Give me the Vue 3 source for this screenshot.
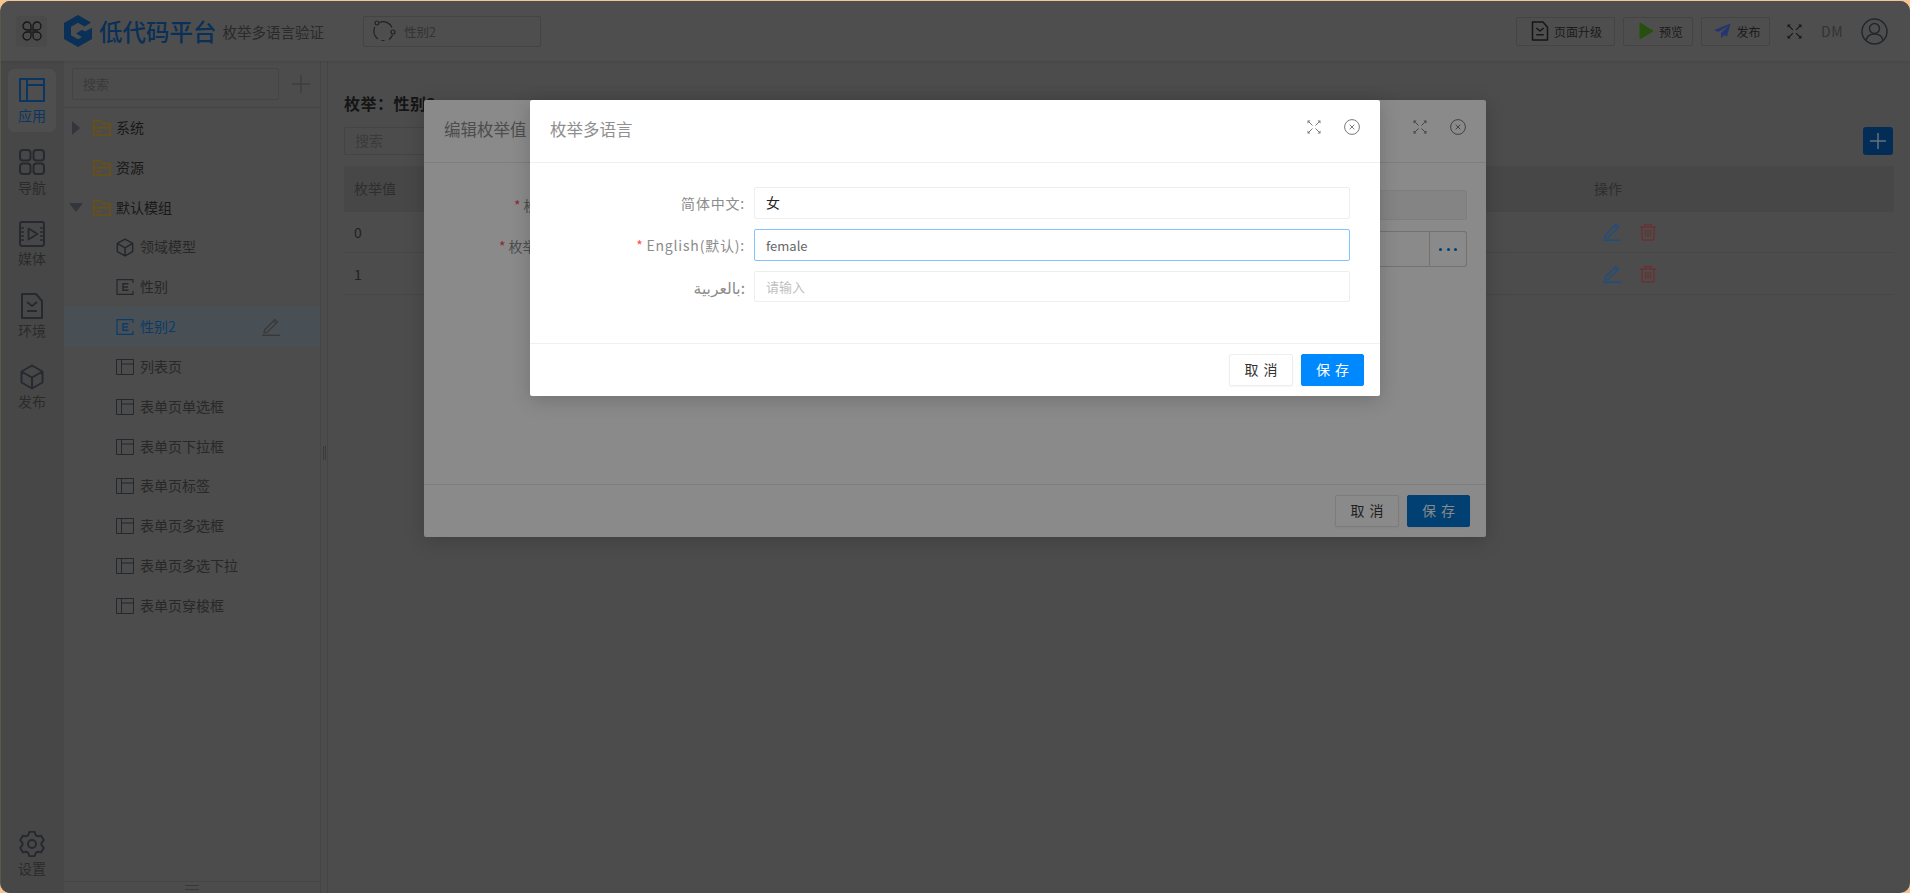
<template>
  <div class="window">
    <svg class="sprites" width="0" height="0" aria-hidden="true">
      <defs>
        <symbol id="i-layout" viewBox="0 0 26 24">
          <path d="M1 1h24v22H1zM8 1v22M8 7h17" fill="none" stroke="currentColor" stroke-width="2" />
        </symbol>
        <symbol id="i-page" viewBox="0 0 18 16">
          <path d="M.5.5h17v15H.5zM5.5.5v15M5.5 5h12" fill="none" stroke="currentColor" stroke-width="1" />
        </symbol>
        <symbol id="i-enum" viewBox="0 0 18 16">
          <path d="M17 4V.7H1v14.6h16V12" fill="none" stroke="currentColor" stroke-width="1.2" />
          <path d="M12.500 4.700H7v6.600h5.500M7 8h5" fill="none" stroke="currentColor" stroke-width="1.400" />
        </symbol>
        <symbol id="i-cube" viewBox="0 0 24 26">
          <path d="M12 1.500 22.500 7.500v11L12 24.500 1.500 18.500v-11zM1.500 7.500 12 13.500l10.500-6M12 13.500v11" fill="none" stroke="currentColor" stroke-width="2" stroke-linejoin="round" />
        </symbol>
        <symbol id="i-folder" viewBox="0 0 18 16">
          <path d="M.75 15.250V.75h6.500l2 3h8v11.500zM.75 7.750h16.500M3.500 11.250H8" fill="none" stroke="currentColor" stroke-width="1.500" />
        </symbol>
        <symbol id="i-doc" viewBox="0 0 24 26">
          <path d="M2 1h14l6 7v17H2zM7 9l5 4 5-4M7 18h10" fill="none" stroke="currentColor" stroke-width="2" stroke-linejoin="round" />
        </symbol>
        <symbol id="i-pen" viewBox="0 0 18 18">
          <path d="M2.500 12 12.800 1.500l2.700 2.600L5 14.500l-3 .5zM11.300 3l2.700 2.600" fill="none" stroke="currentColor" stroke-width="1.200" />
          <path d="M0 17.300h18" stroke="currentColor" stroke-width="1.400" />
        </symbol>
        <symbol id="i-expand" viewBox="0 0 14 14">
          <path d="M1.500 1.500l4 4M12.500 1.500l-4 4M1.500 12.500l4-4M12.500 12.500l-4-4" fill="none" stroke="currentColor" stroke-width="1" />
          <path d="M.5.5h3l-3 3zM13.500.5h-3l3 3zM.5 13.500h3l-3-3zM13.500 13.500h-3l3-3z" fill="currentColor" />
        </symbol>
        <symbol id="i-close" viewBox="0 0 16 16">
          <circle cx="8" cy="8" r="7.400" fill="none" stroke="currentColor" stroke-width="1" />
          <path d="M5.700 5.700l4.600 4.600M10.300 5.700l-4.600 4.600" stroke="currentColor" stroke-width="1" />
        </symbol>
        <symbol id="i-trash" viewBox="0 0 16 18">
          <path d="M0 4h16M5 4V1.500h6V4M2 4v11.500a1.500 1.500 0 0 0 1.500 1.500h9a1.500 1.500 0 0 0 1.500-1.500V4" fill="none" stroke="currentColor" stroke-width="1.500" stroke-linejoin="round" />
          <path d="M5.500 7v7M8 7v7M10.500 7v7" stroke="currentColor" stroke-width="1.200" />
        </symbol>
      </defs>
    </svg>

    <header class="topbar">
      <div class="apps-btn">
        <svg width="20" height="20" viewBox="0 0 20 20">
          <path d="M9 9H5a4 4 0 1 1 4-4zM11 9V5a4 4 0 1 1 4 4zM9 11v4a4 4 0 1 1-4-4zM11 11h4a4 4 0 1 1-4 4z" fill="none" stroke="currentColor" stroke-width="1.300" />
        </svg>
      </div>
      <svg class="logo" width="28" height="32" viewBox="0 0 28 32">
        <path d="M14 0 27 7.500 20.500 11.500 14 7.800 7 11.800v8.400l7 4 4-2.300-6-3.400 6-3.700 3 1.800L28 12.800V24L14 32 0 24V8z" fill="#0a3058" />
      </svg>
      <span class="brand">低代码平台</span>
      <span class="app-name">枚举多语言验证</span>
      <div class="scope">
        <svg width="24" height="22" viewBox="0 0 24 22">
          <path d="M7.500 2.500A9.500 9.500 0 0 1 20 7.500M2.700 7A9.500 9.500 0 0 0 6 19M17 19.500a9.500 9.500 0 0 0 3.500-4.500M9.500 20.500h3" fill="none" stroke="currentColor" stroke-width="1.200" />
          <circle cx="5" cy="3" r="2" fill="none" stroke="currentColor" stroke-width="1.200" />
          <circle cx="21" cy="12" r="2" fill="none" stroke="currentColor" stroke-width="1.200" />
        </svg>
        <span>性别2</span>
      </div>
      <div class="top-actions">
        <button class="top-btn upgrade">
          <svg class="doc-icon" width="18" height="20"><use href="#i-doc" /></svg>页面升级
        </button>
        <button class="top-btn preview">
          <svg width="15" height="18" viewBox="0 0 15 18"><path d="M1 1v16l13-8z" fill="#27500e" stroke="#27500e" stroke-linejoin="round" /></svg>预览
        </button>
        <button class="top-btn publish">
          <svg width="17" height="16" viewBox="0 0 17 16"><path d="M16.500.500 0 7l4.500 2L14 3 7 10v5.500l3-3.500 3 1.500z" fill="#24366e" /></svg>发布
        </button>
        <svg class="full-icon" width="15" height="15"><use href="#i-expand" /></svg>
        <span class="user-name">DM</span>
        <svg class="avatar" width="27" height="27" viewBox="0 0 27 27">
          <circle cx="13.500" cy="13.500" r="12.500" fill="none" stroke="currentColor" stroke-width="1.500" />
          <circle cx="13.500" cy="10.500" r="5" fill="none" stroke="currentColor" stroke-width="1.500" />
          <path d="M5 22.500c1-4.500 4.500-6.500 8.500-6.500s7.500 2 8.500 6.500" fill="none" stroke="currentColor" stroke-width="1.500" />
        </svg>
      </div>
    </header>

    <div class="main">
      <nav class="rail">
        <div class="rail-item active">
          <svg width="26" height="24"><use href="#i-layout" /></svg>
          <span>应用</span>
        </div>
        <div class="rail-item">
          <svg class="nav-icon" width="26" height="26" viewBox="0 0 26 26">
            <rect x="1" y="1" width="10.500" height="10.500" rx="3" fill="none" stroke="currentColor" stroke-width="2" />
            <rect x="14.500" y="1" width="10.500" height="10.500" rx="3" fill="none" stroke="currentColor" stroke-width="2" />
            <rect x="1" y="14.500" width="10.500" height="10.500" rx="3" fill="none" stroke="currentColor" stroke-width="2" />
            <rect x="14.500" y="14.500" width="10.500" height="10.500" rx="3" fill="none" stroke="currentColor" stroke-width="2" />
          </svg>
          <span>导航</span>
        </div>
        <div class="rail-item">
          <svg width="26" height="26" viewBox="0 0 26 26">
            <rect x="1" y="1" width="24" height="24" rx="2" fill="none" stroke="currentColor" stroke-width="2" />
            <path d="M9.500 7.500v11L18.500 13z" fill="none" stroke="currentColor" stroke-width="1.800" stroke-linejoin="round" />
            <path d="M1 7h4M1 11h4M1 15h4M1 19h4M21 7h4M21 11h4M21 15h4M21 19h4" stroke="currentColor" stroke-width="1.500" />
          </svg>
          <span>媒体</span>
        </div>
        <div class="rail-item">
          <svg width="24" height="26"><use href="#i-doc" /></svg>
          <span>环境</span>
        </div>
        <div class="rail-item">
          <svg width="24" height="26"><use href="#i-cube" /></svg>
          <span>发布</span>
        </div>
        <div class="rail-item settings">
          <svg width="26" height="26" viewBox="0 0 26 26">
            <path :d="gearPath" fill="none" stroke="currentColor" stroke-width="2" stroke-linejoin="round" />
            <circle cx="13" cy="13" r="4" fill="none" stroke="currentColor" stroke-width="2" />
          </svg>
          <span>设置</span>
        </div>
      </nav>

      <aside class="tree">
        <div class="tree-search">
          <div class="search-box">搜索</div>
          <svg width="18" height="18" viewBox="0 0 18 18"><path d="M9 0v18M0 9h18" stroke="currentColor" stroke-width="1.500" /></svg>
        </div>
        <ul class="tree-list">
          <li
            v-for="row in treeRows"
            :key="row.label"
            :class="['tree-row', row.icon === 'folder' ? 'group' : 'leaf', { selected: row.selected }]"
          >
            <template v-if="row.icon === 'folder'">
              <span class="arrow-slot"><i v-if="row.arrow" :class="['arrow', row.arrow]"></i></span>
              <svg class="folder" width="18" height="16"><use href="#i-folder" /></svg>
            </template>
            <svg v-else-if="row.icon === 'cube'" width="18" height="19"><use href="#i-cube" /></svg>
            <svg v-else width="18" height="16"><use :href="'#i-' + row.icon" /></svg>
            <span class="row-text">{{ row.label }}</span>
            <svg v-if="row.selected" class="row-edit" width="18" height="18"><use href="#i-pen" /></svg>
          </li>
        </ul>
        <div class="tree-foot"><i></i></div>
      </aside>

      <div class="splitter"><i></i></div>

      <section class="content">
        <h2 class="page-title">枚举：性别2</h2>
        <div class="toolbar">
          <div class="search-box wide">搜索</div>
          <button class="add-btn">
            <svg width="16" height="16" viewBox="0 0 16 16"><path d="M8 0v16M0 8h16" stroke="#66727e" stroke-width="1.500" /></svg>
          </button>
        </div>
        <div class="table-row table-head">
          <div>枚举值</div>
          <div>操作</div>
        </div>
        <div v-for="v in ['0', '1']" :key="v" class="table-row">
          <div>{{ v }}</div>
          <div class="row-actions">
            <svg class="edit" width="18" height="18"><use href="#i-pen" /></svg>
            <svg class="del" width="16" height="18"><use href="#i-trash" /></svg>
          </div>
        </div>
      </section>
    </div>

    <!-- 底层弹窗：编辑枚举值 -->
    <div class="modal modal-edit">
      <div class="modal-head">
        <span class="modal-title">编辑枚举值</span>
        <svg class="head-full" width="14" height="14"><use href="#i-expand" /></svg>
        <svg class="head-close" width="16" height="16"><use href="#i-close" /></svg>
      </div>
      <div class="modal-body">
        <div class="edit-row first">
          <label><em>*</em>枚举值</label>
          <div class="edit-input disabled"></div>
        </div>
        <div class="edit-row second">
          <label><em>*</em>枚举名称</label>
          <div class="edit-input"></div>
          <div class="more-btn"><i></i><i></i><i></i></div>
        </div>
      </div>
      <div class="modal-foot">
        <button class="btn">取 消</button>
        <button class="btn primary">保 存</button>
      </div>
    </div>

    <!-- 顶层弹窗：枚举多语言 -->
    <div class="modal modal-lang">
      <div class="modal-head">
        <span class="modal-title">枚举多语言</span>
        <svg class="head-full" width="14" height="14"><use href="#i-expand" /></svg>
        <svg class="head-close" width="16" height="16"><use href="#i-close" /></svg>
      </div>
      <div class="modal-body lang-body">
        <div v-for="f in langFields" :key="f.label" class="lang-row">
          <label :class="{ arabic: f.arabic }"><em v-if="f.required">*</em>{{ f.label }}:</label>
          <input :class="{ focused: f.required, cjk: f.value !== 'female' }" :value="f.value" placeholder="请输入" />
        </div>
      </div>
      <div class="modal-foot">
        <button class="btn">取 消</button>
        <button class="btn primary">保 存</button>
      </div>
    </div>
  </div>
</template>

<script setup>
const treeRows = [
  { label: "系统", icon: "folder", arrow: "right" },
  { label: "资源", icon: "folder" },
  { label: "默认模组", icon: "folder", arrow: "down" },
  { label: "领域模型", icon: "cube" },
  { label: "性别", icon: "enum" },
  { label: "性别2", icon: "enum", selected: true },
  { label: "列表页", icon: "page" },
  { label: "表单页单选框", icon: "page" },
  { label: "表单页下拉框", icon: "page" },
  { label: "表单页标签", icon: "page" },
  { label: "表单页多选框", icon: "page" },
  { label: "表单页多选下拉", icon: "page" },
  { label: "表单页穿梭框", icon: "page" },
];

const langFields = [
  { label: "简体中文", value: "女" },
  { label: "English(默认)", value: "female", required: true },
  { label: "بالعربية", value: "", arabic: true },
];

// 六齿齿轮轮廓
function buildGear() {
  const pts = [];
  for (let i = 0; i < 6; i++) {
    const a = (Math.PI / 3) * i - Math.PI / 2;
    const step = 0.3;
    pts.push([a - step * 1.35, 9.6], [a - step * 0.7, 12.4], [a + step * 0.7, 12.4], [a + step * 1.35, 9.6]);
  }
  return (
    pts
      .map(([a, r], i) => (i ? "L" : "M") + (13 + r * Math.cos(a)).toFixed(2) + " " + (13 + r * Math.sin(a)).toFixed(2))
      .join("") + "Z"
  );
}
const gearPath = buildGear();
</script>

<style>
html,
body {
  margin: 0;
  background: #f7c593;
}
</style>

<style scoped>
.window {
  position: relative;
  box-sizing: border-box;
  height: 892px;
  margin-top: 1px;
  border-left: 1px solid #5c564f;
  border-radius: 10px;
  overflow: hidden;
  display: flex;
  flex-direction: column;
  background: #4c4c4c;
  color: #1d1d1d;
  font-family: "Noto Sans CJK SC", "Noto Sans", "DejaVu Sans", sans-serif;
  font-size: 14px;
}

.sprites {
  position: absolute;
}

.topbar {
  flex: none;
  height: 60px;
  display: flex;
  align-items: center;
  padding-left: 15px;
  background: #4e4e4e;
  box-shadow: 0 1px 3px rgba(0, 0, 0, 0.08);
  position: relative;
}

.apps-btn {
  width: 31px;
  height: 31px;
  display: flex;
  align-items: center;
  justify-content: center;
  background: #4a4a4a;
  color: #161616;
  border-radius: 4px;
}

.logo {
  margin-left: 17px;
}

.brand {
  margin-left: 7px;
  font-size: 23.500px;
  line-height: 32px;
  font-weight: 500;
  color: #0a3058;
}

.app-name {
  margin-left: 6px;
  font-size: 14.500px;
  color: #2a2a2a;
}

.scope {
  margin-left: 39px;
  width: 178px;
  height: 31px;
  box-sizing: border-box;
  border: 1px solid #444;
  border-radius: 2px;
  display: flex;
  align-items: center;
  gap: 8px;
  padding-left: 8px;
  color: #222;
  font-size: 12.500px;
}

.scope span {
  color: #333;
}

.top-actions {
  margin-left: auto;
  display: flex;
  align-items: center;
  padding-right: 22px;
}

.top-btn {
  height: 29px;
  box-sizing: border-box;
  border: 1px solid #444;
  border-radius: 2px;
  background: none;
  color: #1a1a1a;
  display: flex;
  align-items: center;
  justify-content: center;
  gap: 5px;
  padding: 0;
  font: 12px "Noto Sans CJK SC", sans-serif;
}

.upgrade {
  width: 99px;
  padding-left: 2px;
}

.preview {
  width: 70px;
  margin-left: 8px;
  padding-left: 6px;
}

.publish {
  width: 69px;
  margin-left: 8px;
  padding-left: 4px;
}

.doc-icon {
  color: #161616;
}

.full-icon {
  margin-left: 17px;
  color: #161616;
}

.user-name {
  margin-left: 19px;
  color: #333;
  font-size: 14px;
  letter-spacing: 0.5px;
}

.avatar {
  margin-left: 18px;
  color: #23272c;
}

.main {
  flex: 1;
  min-height: 0;
  display: flex;
}

.rail {
  flex: none;
  width: 63px;
  box-sizing: border-box;
  padding: 8px 0 8px 7px;
  background: #474747;
  display: flex;
  flex-direction: column;
  gap: 8.500px;
}

.rail-item {
  width: 48px;
  height: 63px;
  box-sizing: border-box;
  padding-top: 9px;
  display: flex;
  flex-direction: column;
  align-items: center;
  border-radius: 6px;
  color: #262a30;
}

.rail-item span {
  margin-top: 1px;
  line-height: 20px;
  font-size: 14px;
  color: #2b2b2b;
}

.nav-icon {
  margin: -1px 0 1px;
}

.rail-item.active {
  background: #4e4e4e;
  color: #0b3662;
}

.rail-item.active span {
  margin-top: 3px;
  color: #0b3662;
}

.rail-item.settings {
  margin-top: auto;
}

.tree {
  flex: none;
  width: 256px;
  display: flex;
  flex-direction: column;
  border-right: 1px solid #434643;
  box-sizing: content-box;
}

.tree-search {
  flex: none;
  height: 47px;
  box-sizing: border-box;
  display: flex;
  align-items: center;
  gap: 13px;
  padding: 0 0 0 8px;
  border-bottom: 1px solid #444;
  color: #3e3e3e;
}

.search-box {
  box-sizing: border-box;
  width: 207px;
  height: 32px;
  border: 1px solid #444;
  border-radius: 2px;
  padding-left: 10px;
  line-height: 30px;
  font-size: 13px;
  color: #3a3a3a;
}

.search-box.wide {
  width: 240px;
  height: 28px;
  line-height: 24px;
  font-size: 14px;
}

.tree-list {
  flex: 1;
  list-style: none;
  margin: 0;
  padding: 0;
}

.tree-row {
  height: 39.830px;
  box-sizing: border-box;
  display: flex;
  align-items: center;
  gap: 6px;
  color: #282828;
  font-size: 14px;
}

.row-text {
  margin-bottom: 2px;
}

.tree-row svg {
  color: #24272b;
}

.tree-row.group {
  padding-left: 5px;
  gap: 0;
  color: #181818;
}

.tree-row.group .row-text {
  margin-left: 5px;
}

.tree-row.leaf {
  padding-left: 52px;
}

.arrow-slot {
  width: 24px;
  display: block;
}

.arrow {
  display: block;
  width: 0;
  height: 0;
}

.arrow.right {
  margin-left: 3px;
  border-left: 8px solid #33363a;
  border-top: 7.500px solid transparent;
  border-bottom: 7.500px solid transparent;
}

.arrow.down {
  border-top: 9px solid #33363a;
  border-left: 7px solid transparent;
  border-right: 7px solid transparent;
}

.tree-row svg.folder {
  color: #6a5010;
}

.tree-row.selected {
  background: #485055;
  color: #0c3b6a;
}

.tree-row.selected svg {
  color: #0c3b6a;
}

.tree-row svg.row-edit {
  margin-left: auto;
  margin-right: 40px;
  color: #383838;
}

.tree-foot {
  flex: none;
  height: 11px;
  border-top: 1px solid #424643;
  display: flex;
  justify-content: center;
  align-items: center;
}

.tree-foot i {
  width: 14px;
  height: 3px;
  border-top: 1px solid #383838;
  border-bottom: 1px solid #383838;
}

.splitter {
  flex: none;
  width: 6px;
  border-right: 1px solid #434643;
  display: flex;
  align-items: center;
  justify-content: center;
  padding-bottom: 48px;
  box-sizing: content-box;
}

.splitter i {
  width: 1px;
  height: 14px;
  border-left: 1px solid #3a3a3a;
  border-right: 1px solid #3a3a3a;
}

.content {
  flex: 1;
  min-width: 0;
  padding: 30px 16px 0 16px;
}

.page-title {
  margin: 0;
  font-size: 16px;
  line-height: 24px;
  font-weight: 700;
  letter-spacing: 0.5px;
  color: #151515;
}

.toolbar {
  margin-top: 12px;
  display: flex;
  justify-content: space-between;
  align-items: center;
  height: 28px;
  padding-right: 1px;
}

.add-btn {
  width: 30px;
  height: 28px;
  padding: 0;
  border: 0;
  border-radius: 3px;
  background: #032c56;
  display: flex;
  align-items: center;
  justify-content: center;
}

.table-row {
  display: grid;
  grid-template-columns: 1240px 1fr;
  height: 42px;
  box-sizing: border-box;
  align-items: center;
  border-bottom: 1px solid #464646;
  color: #222;
}

.table-row > div {
  padding-left: 10px;
}

.table-row:nth-child(4) {
  height: 41px;
}

.table-head {
  margin-top: 11px;
  height: 46px;
  padding-bottom: 2px;
  background: #474747;
  border-bottom: 0;
  color: #2e2e2e;
}

.row-actions {
  display: flex;
  align-items: center;
  gap: 19px;
}

.table-row > .row-actions {
  padding-left: 19px;
}

.edit {
  color: #1a4f85;
}

.del {
  color: #6a3030;
}

.modal {
  position: absolute;
  top: 99px;
  display: flex;
  flex-direction: column;
  box-shadow: 0 4px 20px rgba(0, 0, 0, 0.18);
  border-radius: 2px;
}

.modal-edit {
  left: 423px;
  width: 1062px;
  height: 437px;
  background: #8a8a8a;
}

.modal-lang {
  left: 529px;
  width: 850px;
  height: 296px;
  background: #fff;
}

.modal-head {
  flex: none;
  height: 63px;
  box-sizing: border-box;
  display: flex;
  padding-left: 20px;
  border-bottom: 1px solid #f0f0f0;
}

.modal-edit .modal-head {
  border-bottom-color: #7e7e7e;
}

.modal-title {
  line-height: 58px;
  font-size: 16.500px;
  color: #8f8f8f;
}

.modal-edit .modal-title {
  color: #4d4d4d;
}

.head-full {
  margin: 20px 0 0 auto;
  color: #7a7a7a;
}

.head-close {
  margin: 19px 20px 0 23px;
  color: #7a7a7a;
}

.modal-edit .head-full,
.modal-edit .head-close {
  color: #424242;
}

.modal-body {
  flex: 1;
}

.modal-foot {
  flex: none;
  height: 53px;
  box-sizing: border-box;
  display: flex;
  justify-content: flex-end;
  gap: 8px;
  padding: 10px 16px 0 0;
  border-top: 1px solid #f0f0f0;
}

.modal-edit .modal-foot {
  border-top-color: #7e7e7e;
}

.btn {
  width: 64px;
  height: 32px;
  box-sizing: border-box;
  padding: 0 0 2px;
  border: 1px solid #eee;
  border-radius: 2px;
  background: #fff;
  color: #333;
  font: 14px "Noto Sans CJK SC", sans-serif;
  word-spacing: 2px;
  box-shadow: 0 1px 2px rgba(0, 0, 0, 0.04);
}

.btn.primary {
  width: 63px;
  border-color: #0088ff;
  background: #0088ff;
  color: #fff;
}

.modal-edit .btn {
  border-color: #7c7c7c;
  background: #8a8a8a;
  color: #1f1f1f;
}

.modal-edit .btn.primary {
  border-color: #004072;
  background: #004072;
  color: #8a8a8a;
}

.edit-row {
  display: flex;
  align-items: stretch;
  padding-right: 19px;
}

.edit-row label {
  width: 150px;
  flex: none;
  padding-left: 90px;
  box-sizing: border-box;
  white-space: nowrap;
  color: #4d4d4d;
  line-height: 30px;
}

.edit-row em,
.lang-row em {
  font-style: normal;
  color: #ff4d4f;
  margin-right: 3px;
}

.edit-row em {
  color: #8a2a2c;
}

.edit-row.first {
  margin-top: 27px;
  height: 30px;
}

.edit-row.second {
  margin-top: 11px;
  height: 36px;
}

.edit-row.second label {
  padding-left: 75px;
}

.edit-input {
  flex: 1;
  margin-left: 40px;
  border: 1px solid #7e7e7e;
  border-radius: 2px 0 0 2px;
}

.edit-input.disabled {
  background: #848484;
  border-radius: 2px;
}

.second .edit-input {
  border-color: #727272;
}

.more-btn {
  width: 37px;
  box-sizing: border-box;
  border: 1px solid #727272;
  border-left: 0;
  border-radius: 0 3px 3px 0;
  display: flex;
  align-items: center;
  justify-content: center;
  gap: 4.500px;
}

.more-btn i {
  width: 3px;
  height: 3px;
  border-radius: 50%;
  background: #004072;
}

.lang-body {
  display: flex;
  flex-direction: column;
  gap: 10px;
  padding: 24px 30px 0 0;
}

.lang-row {
  display: flex;
  align-items: center;
  height: 32px;
}

.lang-row:last-child input {
  height: 31px;
  align-self: flex-start;
}

.lang-row label {
  width: 215px;
  margin-right: 9px;
  text-align: right;
  color: #8c8c8c;
  font-size: 14px;
  letter-spacing: 0.8px;
}

.lang-row label.arabic {
  font-size: 15.500px;
  letter-spacing: 0;
}

.lang-row input {
  flex: 1;
  min-width: 0;
  height: 32px;
  box-sizing: border-box;
  padding: 0 11px;
  border: 1px solid #eee;
  border-radius: 2px;
  outline: none;
  color: #666;
  font: 13px "Noto Sans CJK SC", "Noto Sans", sans-serif;
}

.lang-row input.cjk {
  color: #222;
  font-size: 14px;
  padding-bottom: 2px;
}

.lang-row input.focused {
  border-color: #82c3ff;
}

.lang-row input::placeholder {
  color: #bfbfbf;
  font-size: 13px;
}
</style>
